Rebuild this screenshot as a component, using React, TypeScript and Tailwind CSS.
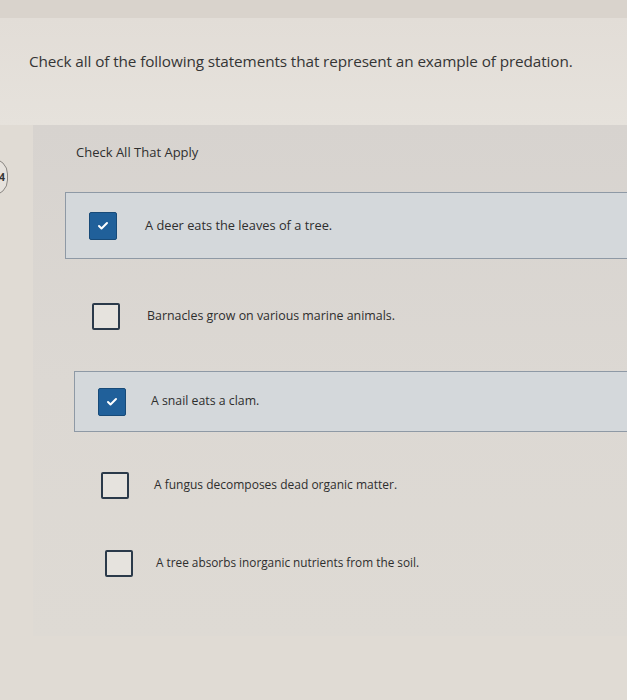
import { Check } from 'lucide-react';

type Choice = {
  label: string;
  checked: boolean;
  rowClass: string;
  textClass: string;
};

// rows drift a little to the right as they go down the panel
const choices: Choice[] = [
  { label: 'A deer eats the leaves of a tree.', checked: true, rowClass: 'ml-[32px] mt-[32px] h-[67px]', textClass: 'ml-[28px] text-[12.8px]' },
  { label: 'Barnacles grow on various marine animals.', checked: false, rowClass: 'ml-[36px] mt-[24px] h-[66px]', textClass: 'ml-[27px] text-[12.4px]' },
  { label: 'A snail eats a clam.', checked: true, rowClass: 'ml-[41px] mt-[22px] h-[61px]', textClass: 'ml-[25px] text-[12.3px]' },
  { label: 'A fungus decomposes dead organic matter.', checked: false, rowClass: 'ml-[45px] mt-[23px] h-[60px]', textClass: 'ml-[25px] text-[12px]' },
  { label: 'A tree absorbs inorganic nutrients from the soil.', checked: false, rowClass: 'ml-[49px] mt-[18px] h-[60px]', textClass: 'ml-[23px] text-[11.8px]' },
];

function ChoiceRow({ choice }: { choice: Choice }) {
  return (
    <div
      className={`flex items-center pl-[23px] ${choice.rowClass} ${
        choice.checked ? 'bg-[#d4d8db] border border-r-0 border-[#8e99a5]' : ''
      }`}
    >
      {choice.checked ? (
        <span className="flex h-[28px] w-[28px] shrink-0 items-center justify-center rounded-[2px] border border-[#174a78] bg-[#20609a]">
          <Check className="h-[12px] w-[12px] text-white" strokeWidth={4} />
        </span>
      ) : (
        <span className="h-[27px] w-[28px] shrink-0 rounded-[2px] border-2 border-[#2b3a4a] bg-[#e6e3de]" />
      )}
      <span className={`text-[#2e2e2e] ${choice.textClass}`}>{choice.label}</span>
    </div>
  );
}

export default function App() {
  return (
    <div
      className="relative h-[700px] w-[627px] overflow-hidden bg-[#e0dbd4]"
      style={{ fontFamily: '"Open Sans", Lato, sans-serif' }}
    >
      <div className="h-[18px] bg-[#d9d3cc]" />
      <div className="bg-gradient-to-b from-[#e2ddd7] to-[#e6e2dc] pl-[29px] pt-[33px] pb-[54px]">
        <h1 className="text-[15.3px] leading-[20px] tracking-[-0.1px] text-[#353535]">
          Check all of the following statements that represent an example of predation.
        </h1>
      </div>

      {/* page-number badge peeking in from the left edge */}
      <div className="absolute left-[-24px] top-[158px] flex h-[38px] w-[32px] items-center justify-end rounded-full border border-[#8a8682] bg-[#e6e2dd] pr-[2px] text-[10px] font-bold leading-none text-[#333]">
        4
      </div>

      <div className="ml-[33px] h-[511px] bg-gradient-to-b from-[#d7d3cf] via-[#dcd8d3] to-[#dedad4]">
        <p className="pl-[43px] pt-[19px] text-[13px] leading-[16px] text-[#2f2f2f]">Check All That Apply</p>
        <div className="flex flex-col">
          {choices.map((choice) => (
            <ChoiceRow key={choice.label} choice={choice} />
          ))}
        </div>
      </div>
    </div>
  );
}
